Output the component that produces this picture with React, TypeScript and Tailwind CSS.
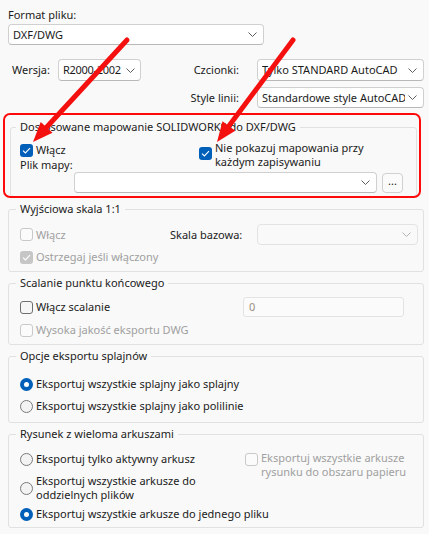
import type { ReactNode } from "react";

const Chevron = ({ light = false }: { light?: boolean }) => (
  <svg width="9" height="5" viewBox="0 0 9 5" className="shrink-0">
    <path d="M0.5 0.5 L4.5 4.5 L8.5 0.5" fill="none" stroke={light ? "#b5b5b5" : "#5f5f5f"} strokeWidth="1" />
  </svg>
);

const Select = ({
  value = "",
  className = "",
  textClass = "",
  disabled = false,
}: {
  value?: string;
  className?: string;
  textClass?: string;
  disabled?: boolean;
}) => (
  <div
    className={`flex shrink-0 items-center justify-between rounded-[4px] border pl-[4px] ${
      disabled ? "border-[#e3e3e3] bg-[#f9f9f9]" : "border-[#d0d0d0] border-b-[#b8b8b8] bg-white"
    } ${className}`}
  >
    <span className={`overflow-hidden whitespace-nowrap ${textClass}`}>{value}</span>
    <Chevron light={disabled} />
  </div>
);

const Check = () => (
  <svg width="9" height="7" viewBox="0 0 9 7">
    <path d="M1 3.6 L3.4 6 L8 1.2" fill="none" stroke="white" strokeWidth="1.1" />
  </svg>
);

const Checkbox = ({ checked = false, disabled = false }: { checked?: boolean; disabled?: boolean }) => {
  if (checked)
    return (
      <span
        className={`flex h-[13px] w-[13px] shrink-0 items-center justify-center rounded-[3px] ${
          disabled ? "bg-[#c6c6c6]" : "bg-[#005fb8]"
        }`}
      >
        <Check />
      </span>
    );
  return (
    <span
      className={`block h-[13px] w-[13px] shrink-0 rounded-[3px] border ${
        disabled ? "border-[#c9c9c9] bg-[#fbfbfb]" : "border-[#6f6f6f] bg-[#f6f6f6]"
      }`}
    />
  );
};

const Radio = ({ checked = false }: { checked?: boolean }) =>
  checked ? (
    <span className="flex h-[13px] w-[13px] shrink-0 items-center justify-center rounded-full bg-[#005fb8]">
      <span className="h-[5px] w-[5px] rounded-full bg-white" />
    </span>
  ) : (
    <span className="h-[13px] w-[13px] shrink-0 rounded-full border border-[#7a7a7a] bg-[#f3f3f3]" />
  );

const Group = ({ title, className = "", children }: { title: string; className?: string; children: ReactNode }) => (
  <fieldset className={`rounded-[3px] border border-[#e1e1e1] ${className}`}>
    <legend className="ml-[7px] px-[4px] leading-[14px]">{title}</legend>
    <div className="pl-[11px]">{children}</div>
  </fieldset>
);

export default function App() {
  return (
    <div className="relative h-[534px] w-[429px] overflow-hidden bg-[#f9f9f9] pl-[8px] pr-[5px] pt-[8px] font-['Noto_Sans',sans-serif] text-[11px] leading-[14px] text-[#1b1b1b]">
      {/* Format */}
      <div>Format pliku:</div>
      <Select value="DXF/DWG" className="mt-[2px] h-[21px] w-[256px] pr-[6px]" />

      {/* Wersja / Czcionki */}
      <div className="mt-[14px] flex h-[22px] items-center">
        <span className="w-[50px] pl-[4px]">Wersja:</span>
        <Select value="R2000-2002" className="h-[22px] w-[83px] pr-[5px]" textClass="tracking-[-0.3px]" />
        <span className="flex-1 pr-[18px] text-right">Czcionki:</span>
        <Select value="Tylko STANDARD AutoCAD" className="h-[22px] w-[167px] pr-[6px]" />
      </div>
      <div className="mt-[6px] flex h-[21px] items-center justify-end">
        <span className="pr-[18px]">Style linii:</span>
        <Select value="Standardowe style AutoCAD" className="h-[21px] w-[167px] gap-[3px] pr-[6px]" />
      </div>

      {/* Mapowanie */}
      <fieldset className="ml-[2px] mr-[7px] mt-[12px] rounded-[3px] border border-[#e1e1e1]">
        <legend className="ml-[5px] px-[4px] leading-[14px]">Dostosowane mapowanie SOLIDWORKS do DXF/DWG</legend>
        <div className="pb-[3px] pl-[9px] pt-[7px]">
          <div className="flex">
            <div className="w-[179px] shrink-0 pt-[2px]">
              <div className="flex items-center gap-[3px]">
                <Checkbox checked />
                <span>Włącz</span>
              </div>
              <div className="mt-[1px]">Plik mapy:</div>
            </div>
            <div className="flex items-start gap-[3px]">
              <span className="mt-[6px] shrink-0">
                <Checkbox checked />
              </span>
              <span className="leading-[14px]">
                Nie pokazuj mapowania przy
                <br />
                każdym zapisywaniu
              </span>
            </div>
          </div>
          <div className="flex items-start">
            <Select className="ml-[54px] h-[21px] w-[303px] pr-[6px]" />
            <button className="ml-[5px] mt-[1px] flex h-[20px] w-[21px] items-center justify-center rounded-[4px] border border-[#d0d0d0] bg-[#fbfbfb] pb-[4px] leading-[10px]">
              ...
            </button>
          </div>
        </div>
      </fieldset>

      {/* Skala */}
      <Group title="Wyjściowa skala 1:1" className="mt-[5px]">
        <div className="pb-[7px] pt-[8px]">
          <div className="flex h-[21px] items-center">
            <div className="flex w-[150px] shrink-0 items-center gap-[3px] text-[#a0a0a0]">
              <Checkbox disabled />
              <span>Włącz</span>
            </div>
            <span className="w-[87px] shrink-0">Skala bazowa:</span>
            <Select disabled className="h-[21px] w-[161px] pr-[6px]" />
          </div>
          <div className="mt-[5px] flex items-center gap-[3px] text-[#a0a0a0]">
            <Checkbox checked disabled />
            <span>Ostrzegaj jeśli włączony</span>
          </div>
        </div>
      </Group>

      {/* Scalanie */}
      <Group title="Scalanie punktu końcowego" className="mt-[4px]">
        <div className="pb-[7px] pt-[7px]">
          <div className="flex h-[20px] items-center">
            <div className="flex w-[223px] shrink-0 items-center gap-[3px]">
              <Checkbox />
              <span>Włącz scalanie</span>
            </div>
            <div className="flex h-[20px] w-[161px] items-center rounded-[3px] border border-[#e3e3e3] bg-[#fbfbfb] pl-[5px] text-[#9a8f80]">
              0
            </div>
          </div>
          <div className="mt-[6px] flex items-center gap-[3px] text-[#a0a0a0]">
            <Checkbox disabled />
            <span>Wysoka jakość eksportu DWG</span>
          </div>
        </div>
      </Group>

      {/* Splajny */}
      <Group title="Opcje eksportu splajnów" className="mt-[4px]">
        <div className="flex flex-col gap-[8px] pb-[9px] pt-[14px]">
          <div className="flex items-center gap-[3px]">
            <Radio checked />
            <span>Eksportuj wszystkie splajny jako splajny</span>
          </div>
          <div className="flex items-center gap-[3px]">
            <Radio />
            <span>Eksportuj wszystkie splajny jako polilinie</span>
          </div>
        </div>
      </Group>

      {/* Arkusze */}
      <Group title="Rysunek z wieloma arkuszami" className="mt-[4px]">
        <div className="flex pb-[6px] pt-[11px]">
          <div className="w-[225px] shrink-0">
            <div className="flex items-center gap-[3px]">
              <Radio />
              <span>Eksportuj tylko aktywny arkusz</span>
            </div>
            <div className="mt-[8px] flex items-center gap-[3px]">
              <Radio />
              <span>
                Eksportuj wszystkie arkusze do
                <br />
                oddzielnych plików
              </span>
            </div>
            <div className="mt-[5px] flex items-center gap-[3px] whitespace-nowrap">
              <Radio checked />
              <span>Eksportuj wszystkie arkusze do jednego pliku</span>
            </div>
          </div>
          <div className="-mt-[1px] flex items-start gap-[3px] text-[#a0a0a0]">
            <span className="mt-[2px] shrink-0">
              <Checkbox disabled />
            </span>
            <span className="whitespace-nowrap leading-[14px]">
              Eksportuj wszystkie arkusze
              <br />
              rysunku do obszaru papieru
            </span>
          </div>
        </div>
      </Group>

      {/* Red annotation overlay */}
      <svg className="pointer-events-none absolute left-0 top-0" width="429" height="534" viewBox="0 0 429 534">
        <rect x="4" y="114" width="416" height="83" rx="6" fill="none" stroke="#ff0a0a" strokeWidth="2" />
        <line x1="127" y1="40" x2="46.6" y2="127.3" stroke="#f51010" strokeWidth="5" strokeLinecap="round" />
        <polygon points="33,142 52.5,132.7 40.7,121.9" fill="#f51010" />
        <line x1="293" y1="40" x2="228.9" y2="126" stroke="#f51010" strokeWidth="5" strokeLinecap="round" />
        <polygon points="217,142 235.3,130.8 222.5,121.2" fill="#f51010" />
      </svg>
    </div>
  );
}
